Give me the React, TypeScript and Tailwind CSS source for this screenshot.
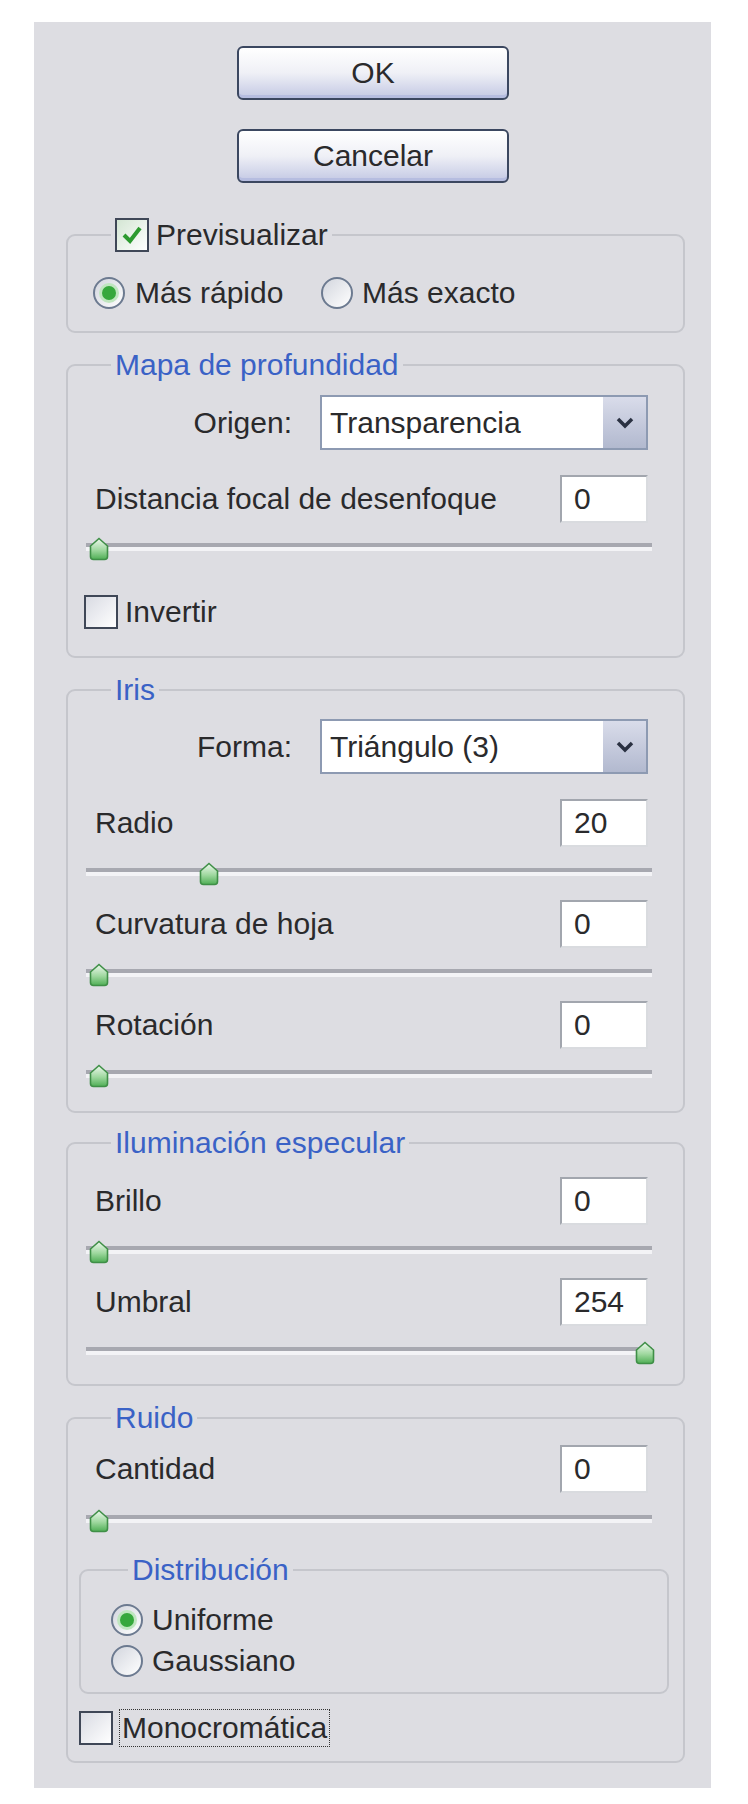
import type { ReactNode } from "react";

const Checkbox = ({ checked = false }: { checked?: boolean }) => (
  <div
    className={`flex h-[34px] w-[34px] shrink-0 items-center justify-center border-2 border-[#3f4757] bg-linear-to-br ${
      checked ? "from-[#d4e6d4] to-white" : "from-[#d9dbe3] to-white"
    }`}
  >
    {checked && (
      <svg width="22" height="20" viewBox="0 0 22 20">
        <path d="M3 10 L9 16 L19 3" fill="none" stroke="#2c9a2f" strokeWidth="4" />
      </svg>
    )}
  </div>
);

const Radio = ({ checked = false }: { checked?: boolean }) => (
  <div className="flex h-[32px] w-[32px] shrink-0 items-center justify-center rounded-full border-2 border-[#6c7a90] bg-linear-to-br from-[#d3d6de] to-white">
    {checked && (
      <div className="h-[14px] w-[14px] rounded-full bg-[#36a83c] shadow-[0_0_0_3px_#bfe6bf]" />
    )}
  </div>
);

const Thumb = () => (
  <svg width="20" height="24" viewBox="0 0 20 24" className="block">
    <defs>
      <linearGradient id="thumbFill" x1="0" y1="0" x2="0" y2="1">
        <stop offset="0" stopColor="#eef8ee" />
        <stop offset="0.55" stopColor="#9fd89f" />
        <stop offset="1" stopColor="#4fae55" />
      </linearGradient>
    </defs>
    <path
      d="M10 1.5 L18.5 9 V19.5 Q18.5 22.5 15.5 22.5 H4.5 Q1.5 22.5 1.5 19.5 V9 Z"
      fill="url(#thumbFill)"
      stroke="#3f8f47"
      strokeWidth="1.6"
    />
  </svg>
);

const Slider = ({ value, max, className = "" }: { value: number; max: number; className?: string }) => (
  <div className={`relative ml-[18px] mr-[31px] h-[24px] pt-[6px] ${className}`}>
    <div className="h-[4px] bg-[#a7a8b0]" />
    <div className="h-[4px] bg-[#f3f3f6]" />
    <div className="absolute top-0" style={{ left: 3 + (value / max) * 548 }}>
      <Thumb />
    </div>
  </div>
);

const NumberBox = ({ value }: { value: string }) => (
  <div className="flex h-[48px] w-[88px] items-center border-2 border-t-[#a2a6ae] border-l-[#a2a6ae] border-r-[#d9dbdf] border-b-[#d9dbdf] bg-white pl-[12px]">
    {value}
  </div>
);

const Field = ({ label, value, className = "" }: { label: string; value: string; className?: string }) => (
  <div className={`ml-[27px] mr-[35px] flex h-[48px] items-center justify-between ${className}`}>
    <span>{label}</span>
    <NumberBox value={value} />
  </div>
);

const Dropdown = ({ label, value }: { label: string; value: string }) => (
  <div className="ml-[27px] mr-[35px] flex h-[55px] items-center">
    <span className="w-[197px] text-right">{label}</span>
    <div className="ml-[28px] flex h-[55px] w-[328px] border-2 border-[#8d9ab2] bg-white">
      <span className="flex flex-1 items-center pl-[8px]">{value}</span>
      <div className="flex w-[45px] items-center justify-center border-l-2 border-white bg-linear-to-b from-[#d9dcea] to-[#b2b9cf]">
        <svg width="18" height="12" viewBox="0 0 18 12">
          <path d="M2 2 L9 9 L16 2" fill="none" stroke="#2a3142" strokeWidth="3.5" />
        </svg>
      </div>
    </div>
  </div>
);

const Group = ({
  legend,
  className,
  children,
}: {
  legend: ReactNode;
  className: string;
  children: ReactNode;
}) => (
  <fieldset className={`rounded-[9px] border-2 border-[#c5c6cc] ${className}`}>
    <legend className="ml-[43px] flex h-[36px] items-center px-[4px] text-[#3a62c6]">{legend}</legend>
    {children}
  </fieldset>
);

const Button = ({ label, className = "" }: { label: string; className?: string }) => (
  <button
    className={`ml-[203px] flex h-[54px] w-[272px] items-center justify-center rounded-[6px] border-2 border-[#3b4760] bg-linear-to-b from-white via-[#eff0f6] to-[#c4c9e4] shadow-[inset_0_-3px_0_#b6bde0] ${className}`}
  >
    {label}
  </button>
);

export default function App() {
  return (
    <div className="min-h-[1804px] bg-white pl-[34px] pt-[22px] font-['Liberation_Sans',Arial,sans-serif] text-[30px] leading-none text-[#2a2a2c]">
      <div className="flex h-[1766px] w-[677px] flex-col bg-[#dddde2] pt-[24px]">
        <Button label="OK" />
        <Button label="Cancelar" className="mt-[29px]" />

        <Group
          className="ml-[32px] mt-[34px] h-[116px] w-[619px]"
          legend={
            <span className="flex items-center gap-[7px] text-[#2a2a2c]">
              <Checkbox checked />
              Previsualizar
            </span>
          }
        >
          <div className="ml-[25px] mt-[22px] flex h-[36px] items-center">
            <div className="flex w-[228px] items-center gap-[10px]">
              <Radio checked />
              <span>Más rápido</span>
            </div>
            <div className="flex items-center gap-[9px]">
              <Radio />
              <span>Más exacto</span>
            </div>
          </div>
        </Group>

        <Group className="ml-[32px] mt-[14px] h-[311px] w-[619px]" legend="Mapa de profundidad">
          <div className="pt-[12px]">
            <Dropdown label="Origen:" value="Transparencia" />
            <Field label="Distancia focal de desenfoque" value="0" className="mt-[25px]" />
            <Slider value={0} max={100} className="mt-[14px]" />
            <div className="ml-[16px] mt-[33px] flex h-[36px] items-center gap-[7px]">
              <Checkbox />
              <span>Invertir</span>
            </div>
          </div>
        </Group>

        <Group className="ml-[32px] mt-[14px] h-[441px] w-[619px]" legend="Iris">
          <div className="pt-[11px]">
            <Dropdown label="Forma:" value="Triángulo (3)" />
            <Field label="Radio" value="20" className="mt-[25px]" />
            <Slider value={20} max={100} className="mt-[15px]" />
            <Field label="Curvatura de hoja" value="0" className="mt-[14px]" />
            <Slider value={0} max={100} className="mt-[15px]" />
            <Field label="Rotación" value="0" className="mt-[14px]" />
            <Slider value={0} max={100} className="mt-[15px]" />
          </div>
        </Group>

        <Group className="ml-[32px] mt-[12px] h-[261px] w-[619px]" legend="Iluminación especular">
          <div className="pt-[16px]">
            <Field label="Brillo" value="0" />
            <Slider value={0} max={255} className="mt-[15px]" />
            <Field label="Umbral" value="254" className="mt-[14px]" />
            <Slider value={254} max={255} className="mt-[15px]" />
          </div>
        </Group>

        <Group className="ml-[32px] mt-[14px] h-[363px] w-[619px]" legend="Ruido">
          <div className="pt-[9px]">
            <Field label="Cantidad" value="0" />
            <Slider value={0} max={100} className="mt-[16px]" />
            <fieldset className="ml-[11px] mt-[19px] h-[142px] w-[590px] rounded-[9px] border-2 border-[#c5c6cc]">
              <legend className="ml-[47px] flex h-[36px] items-center px-[4px] text-[#3a62c6]">
                Distribución
              </legend>
              <div className="ml-[30px] pt-[11px]">
                <div className="flex h-[41px] items-center gap-[9px]">
                  <Radio checked />
                  <span>Uniforme</span>
                </div>
                <div className="flex h-[41px] items-center gap-[9px]">
                  <Radio />
                  <span>Gaussiano</span>
                </div>
              </div>
            </fieldset>
            <div className="ml-[11px] mt-[16px] flex h-[36px] items-center gap-[6px]">
              <Checkbox />
              <span className="border border-dotted border-[#333] px-[2px] py-[3px]">Monocromática</span>
            </div>
          </div>
        </Group>
      </div>
    </div>
  );
}
